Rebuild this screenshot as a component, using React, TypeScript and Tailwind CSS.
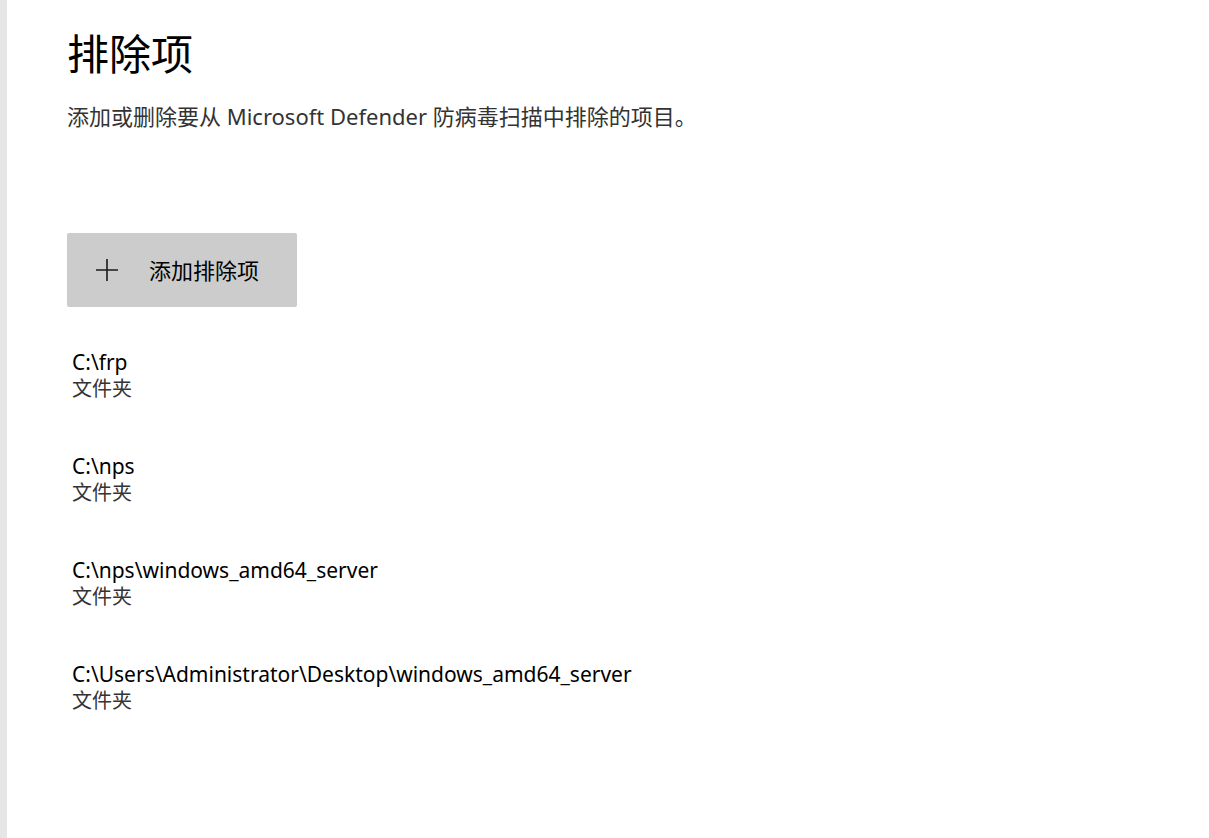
import React from "react";

const items = [
  "C:\\frp",
  "C:\\nps",
  "C:\\nps\\windows_amd64_server",
  "C:\\Users\\Administrator\\Desktop\\windows_amd64_server",
];

export default function App() {
  return (
    <div
      className="flex h-[838px] w-[1209px] overflow-hidden bg-white text-black"
      style={{ fontFamily: '"Noto Sans", "Noto Sans CJK SC", sans-serif' }}
    >
      <div className="w-[7px] shrink-0 bg-[#e6e6e6]" />
      <div className="flex flex-col pl-[60px] pt-[26px]">
        <h1 className="text-[42px] leading-[56px] text-black">排除项</h1>
        <p className="mt-[19px] text-[22px] leading-[30px] text-[#333333]">
          添加或删除要从 Microsoft Defender 防病毒扫描中排除的项目。
        </p>
        <button className="mt-[102px] flex h-[74px] w-[230px] items-center rounded-[2px] bg-[#cccccc] pl-[28px] text-left">
          <svg width="24" height="24" viewBox="0 0 24 24" className="mr-[30px]">
            <path d="M12 1v22M1 12h22" stroke="#1a1a1a" strokeWidth="1.6" fill="none" />
          </svg>
          <span className="text-[22px] leading-[30px] text-black">添加排除项</span>
        </button>
        <div className="mt-[41px] flex flex-col gap-[50px] pl-[5px]">
          {items.map((p) => (
            <div key={p} className="flex flex-col">
              <span className="text-[21px] leading-[28px] text-black">{p}</span>
              <span className="text-[20px] leading-[26px] text-[#333333]">文件夹</span>
            </div>
          ))}
        </div>
      </div>
    </div>
  );
}
